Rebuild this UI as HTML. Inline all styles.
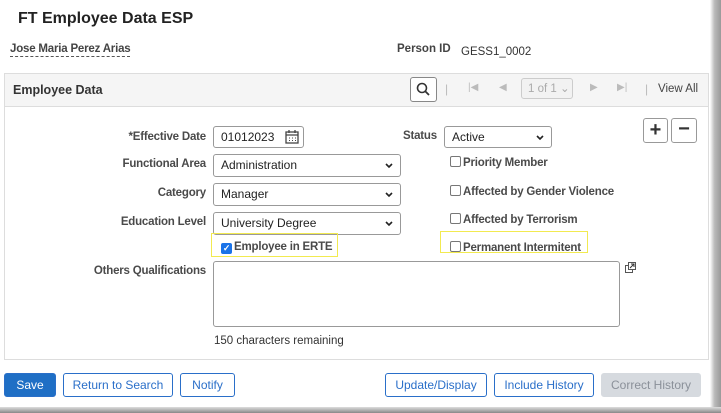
<html><head><style>
body{margin:0;width:721px;height:413px;position:relative;background:#fff;font-family:"Liberation Sans",Arial,sans-serif;font-size:12px;color:#333;overflow:hidden}
.a{position:absolute}
.lbl{position:absolute;font-weight:bold;color:#4a4a4a;font-size:11.5px;text-align:right;letter-spacing:-0.2px}
.inp{position:absolute;border:1px solid #999;border-radius:3px;background:#fff;box-sizing:border-box;padding-left:7px;font-size:12px;color:#222;line-height:20px}
.sel svg{position:absolute;right:7px;top:8px}
.cb{position:absolute;font-weight:bold;color:#4a4a4a;font-size:11.5px;letter-spacing:-0.2px}
.cb i{display:inline-block;width:9px;height:9px;border:1px solid #777;border-radius:2px;vertical-align:-1px;margin-right:2px}
.btn{position:absolute;top:373px;height:24px;box-sizing:border-box;border:1px solid #2a6fc9;border-radius:3px;color:#2a6fc9;text-align:center;line-height:22px;font-size:12px;background:#fff}
</style></head><body>
<div class="a" style="right:0;top:0;width:11px;height:413px;background:linear-gradient(90deg,#fff,#bbb 40%,#999)"></div>
<div class="a" style="left:0;bottom:0;width:721px;height:6px;background:linear-gradient(#ddd,#888)"></div>
<div class="a" style="left:18px;top:10px;font-size:16px;font-weight:bold;color:#222">FT Employee Data ESP</div>
<div class="a" style="left:10px;top:43px;font-weight:bold;color:#444;font-size:11.5px;border-bottom:1px dashed #555;padding-bottom:1px;letter-spacing:-0.2px">Jose Maria Perez Arias</div>
<div class="a" style="left:397px;top:43px;font-weight:bold;color:#444;font-size:11.5px">Person ID</div>
<div class="a" style="left:461px;top:46px;font-size:11.5px">GESS1_0002</div>
<div class="a" style="left:4px;top:73px;width:703px;height:285px;border:1px solid #ddd"></div>
<div class="a" style="left:5px;top:74px;width:703px;height:32px;background:#f5f5f5;border-bottom:1px solid #ddd"></div>
<div class="a" style="left:13px;top:83px;font-weight:bold;font-size:12.5px;color:#333">Employee Data</div>
<div class="a" style="left:410px;top:77px;width:25px;height:23px;border:1px solid #888;border-radius:3px;background:#fff"><svg width="25" height="23"><circle cx="11" cy="10" r="4.5" fill="none" stroke="#333" stroke-width="1.6"/><path d="M14.5 13.5l3.5 3.5" stroke="#333" stroke-width="1.8"/></svg></div>
<div class="a" style="left:445px;top:82px;color:#bbb">|</div>
<div class="a" style="left:468px;top:82px;color:#bbb;font-size:10px">|◀</div>
<div class="a" style="left:499px;top:82px;color:#bbb;font-size:10px">◀</div>
<div class="a" style="left:521px;top:78px;width:52px;height:21px;border:1px solid #ccc;border-radius:3px;background:#f2f2f2;color:#aaa;line-height:21px;padding-left:6px;box-sizing:border-box;font-size:11.5px">1 of 1 ⌄</div>
<div class="a" style="left:590px;top:82px;color:#bbb;font-size:10px">▶</div>
<div class="a" style="left:617px;top:82px;color:#bbb;font-size:10px">▶|</div>
<div class="a" style="left:645px;top:82px;color:#bbb">|</div>
<div class="a" style="left:658px;top:83px;color:#444;font-size:11.5px">View All</div>

<div class="lbl" style="right:515px;top:131px">*Effective Date</div>
<div class="inp" style="left:213px;top:126px;width:91px;height:22px">01012023<svg class="a" style="left:71px;top:3px" width="14" height="14"><rect x="1" y="2" width="12" height="11" fill="none" stroke="#444" stroke-width="1.3"/><path d="M1 5h12M4 0v3M10 0v3" stroke="#444" stroke-width="1.3"/><path d="M4 8h1M7 8h1M10 8h1M4 10.5h1M7 10.5h1M10 10.5h1" stroke="#444"/></svg></div>
<div class="lbl" style="left:403px;top:130px">Status</div>
<div class="inp sel" style="left:444px;top:126px;width:108px;height:22px">Active<svg width="8" height="6"><path d="M1 1l3 3 3-3" fill="none" stroke="#222" stroke-width="1.6"/></svg></div>
<div class="a" style="left:643px;top:118px;width:25px;height:25px;border:1px solid #999;border-radius:3px;box-sizing:border-box;text-align:center;font-size:20px;font-weight:bold;line-height:22px">+</div>
<div class="a" style="left:671px;top:118px;width:26px;height:25px;border:1px solid #999;border-radius:3px;box-sizing:border-box;text-align:center;font-size:20px;font-weight:bold;line-height:21px">−</div>

<div class="lbl" style="right:515px;top:158px">Functional Area</div>
<div class="inp sel" style="left:213px;top:154px;width:188px;height:23px">Administration<svg width="8" height="6"><path d="M1 1l3 3 3-3" fill="none" stroke="#222" stroke-width="1.6"/></svg></div>
<div class="lbl" style="right:515px;top:187px">Category</div>
<div class="inp sel" style="left:213px;top:183px;width:188px;height:23px">Manager<svg width="8" height="6"><path d="M1 1l3 3 3-3" fill="none" stroke="#222" stroke-width="1.6"/></svg></div>
<div class="lbl" style="right:515px;top:216px">Education Level</div>
<div class="inp sel" style="left:213px;top:212px;width:188px;height:23px">University Degree<svg width="8" height="6"><path d="M1 1l3 3 3-3" fill="none" stroke="#222" stroke-width="1.6"/></svg></div>
<div class="cb" style="left:450px;top:156px"><i></i>Priority Member</div>
<div class="cb" style="left:450px;top:185px"><i></i>Affected by Gender Violence</div>
<div class="cb" style="left:450px;top:213px"><i></i>Affected by Terrorism</div>
<div class="a" style="left:211px;top:233px;width:127px;height:24px;border:1px solid #f2ea50;box-sizing:border-box"></div>
<div class="cb" style="left:221px;top:241px"><i style="background:#1a73e8;border-color:#1a73e8;color:#fff;font-size:9px;line-height:9px;text-align:center;font-style:normal">✓</i>Employee in ERTE</div>
<div class="a" style="left:440px;top:231px;width:148px;height:22px;border:1px solid #f2ea50;box-sizing:border-box"></div>
<div class="cb" style="left:450px;top:241px"><i></i>Permanent Intermitent</div>

<div class="lbl" style="right:515px;top:265px">Others Qualifications</div>
<div class="a" style="left:213px;top:261px;width:407px;height:66px;border:1px solid #999;border-radius:3px;box-sizing:border-box"></div>
<svg class="a" style="left:625px;top:262px" width="11" height="11"><rect x="0.5" y="3.5" width="7" height="7" fill="#fff" stroke="#555"/><rect x="3.5" y="0.5" width="7" height="7" fill="#fff" stroke="#555"/><path d="M5 6l4-4M6 2h3v3" fill="none" stroke="#333"/></svg>
<div class="a" style="left:214px;top:335px;font-size:11.5px">150 characters remaining</div>

<div class="btn" style="left:4px;width:52px;background:#1f6fc5;color:#fff">Save</div>
<div class="btn" style="left:63px;width:110px">Return to Search</div>
<div class="btn" style="left:180px;width:55px">Notify</div>
<div class="btn" style="left:385px;width:102px">Update/Display</div>
<div class="btn" style="left:494px;width:100px">Include History</div>
<div class="btn" style="left:601px;width:100px;background:#d6dadf;border-color:#d6dadf;color:#8a9099">Correct History</div>
</body></html>
